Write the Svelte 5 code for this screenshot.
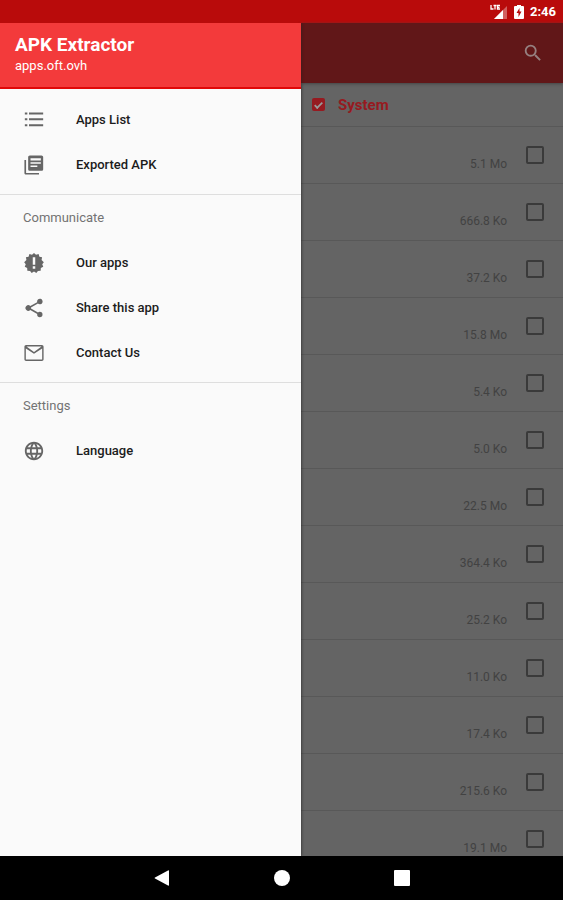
<script>
    let systemApps = true;

    // sizes of the installed apps
    let apps = [
        { size: '5.1 Mo', checked: false },
        { size: '666.8 Ko', checked: false },
        { size: '37.2 Ko', checked: false },
        { size: '15.8 Mo', checked: false },
        { size: '5.4 Ko', checked: false },
        { size: '5.0 Ko', checked: false },
        { size: '22.5 Mo', checked: false },
        { size: '364.4 Ko', checked: false },
        { size: '25.2 Ko', checked: false },
        { size: '11.0 Ko', checked: false },
        { size: '17.4 Ko', checked: false },
        { size: '215.6 Ko', checked: false },
        { size: '19.1 Mo', checked: false }
    ];

    // drawer menu, icons are 24x24 paths
    const menu = [
        {
            items: [
                { label: 'Apps List', icon: 'M1 3h3v2.400H1zM6 3h17v2.400H6zM1 10h3v2.400H1zM6 10h17v2.400H6zM1 17h3v2.400H1zM6 17h17v2.400H6z' },
                { label: 'Exported APK', icon: 'M2.500 6H.5v15.500c0 1.100.9 2 2 2H18v-2H2.500V6zM21 .5H7c-1.100 0-2 .9-2 2v14.500c0 1.100.9 2 2 2h14c1.100 0 2-.9 2-2V2.500c0-1.100-.9-2-2-2zm-.8 10H7.800V8.700h12.400v1.800zm-4.200 4H7.800v-1.800H16v1.800zm4.200-8H7.800V4h12.400v2.500z' }
            ]
        },
        {
            title: 'Communicate',
            items: [
                { label: 'Our apps', icon: 'M12 0l2.400 2.200L17.500 1.300l1 3.100 3.200.8-.6 3.300L23.800 11l-1.900 2.500 1.200 3.100-2.900 1.500-.2 3.300-3.300.1L14.800 24 12 22.300 9.200 24l-1.900-2.500-3.300-.1-.2-3.300-2.900-1.500 1.200-3.100L.2 11l2.700-2.500-.6-3.300 3.200-.8 1-3.100 3.100.9L12 0zm1.500 19v-3h-3v3h3zm0-5V5h-3v9h3z' },
                { label: 'Share this app', icon: 'M19 16.600c-.9 0-1.600.3-2.200.8L8.400 12.700a3 3 0 0 0 0-1.400l8.300-4.700A3.300 3.300 0 1 0 15.700 4.200c0 .3 0 .5.1.8L7.500 9.700a3.300 3.300 0 1 0 0 4.600l8.400 4.800c-.1.200-.1.500-.1.700A3.200 3.200 0 1 0 19 16.600z' },
                { label: 'Contact Us', icon: 'M21.500 2.500h-19c-1.100 0-2 .9-2 2v15c0 1.100.9 2 2 2h19c1.100 0 2-.9 2-2v-15c0-1.100-.9-2-2-2zm.3 17.300H2.200V6.500l9.800 6.300 9.800-6.300v13.300zM12 10.800L3 4.300h18l-9 6.500z' }
            ]
        },
        {
            title: 'Settings',
            items: [
                { label: 'Language', icon: 'M11.990 1C5.900 1 1 5.930 1 12s4.900 11 10.990 11C18.070 23 23 18.070 23 12S18.070 1 11.990 1zm7.600 6.600h-3.240a17 17 0 0 0-1.520-3.920 8.800 8.800 0 0 1 4.760 3.920zM12 3.240c.91 1.320 1.630 2.780 2.100 4.360H9.900c.47-1.580 1.190-3.040 2.100-4.360zM3.490 14.200a9 9 0 0 1 0-4.400h3.710a18 18 0 0 0 0 4.400H3.490zm.9 2.200h3.250c.35 1.380.86 2.690 1.520 3.920a8.800 8.800 0 0 1-4.770-3.920zm3.250-8.800H4.390a8.800 8.800 0 0 1 4.770-3.920A17 17 0 0 0 7.640 7.600zM12 20.760a14.600 14.600 0 0 1-2.100-4.360h4.200A14.600 14.600 0 0 1 12 20.760zm2.570-6.560H9.430a16 16 0 0 1 0-4.400h5.140a16 16 0 0 1 0 4.400zm.28 6.120a17 17 0 0 0 1.510-3.920h3.240a8.800 8.800 0 0 1-4.750 3.920zm1.960-6.120a18 18 0 0 0 0-4.400h3.710a9 9 0 0 1 0 4.400h-3.710z' }
            ]
        }
    ];
</script>

<div class="screen">
    <div class="status">
        <svg width="18" height="16" viewBox="0 0 18 16">
            <path d="M17 2v13H4z" fill="#fff" opacity="0.350" />
            <path d="M13 6v9H4z" fill="#fff" />
            <path d="M1 1v4h2.500M3.500 1.500h3M5 1v4.500M10 1.500H7.500v3.500H10M7.500 3.300h2" fill="none" stroke="#fff" stroke-width="1.300" />
        </svg>
        <svg width="10" height="16" viewBox="0 0 10 16">
            <path d="M3 1h4v1h2q1 0 1 1v11q0 1-1 1H1q-1 0-1-1V3q0-1 1-1h2z" fill="#fff" />
            <path d="M5.500 4L2.500 9H4.500v4l3-5.500h-2z" fill="#b90b0b" />
        </svg>
        <span>2:46</span>
    </div>

    <div class="body">
        <nav class="drawer">
            <header>
                <h1>APK Extractor</h1>
                <p>apps.oft.ovh</p>
            </header>
            {#each menu as group}
                <div class="group" class:titled={group.title}>
                    {#if group.title}
                        <h2>{group.title}</h2>
                    {/if}
                    {#each group.items as item}
                        <button class="item">
                            <svg width="20" height="20" viewBox="0 0 24 24"><path d={item.icon} /></svg>
                            {item.label}
                        </button>
                    {/each}
                </div>
            {/each}
        </nav>

        <main>
            <div class="toolbar">
                <button aria-label="Search">
                    <svg width="22" height="22" viewBox="0 0 24 24">
                        <path d="M15.500 14h-.79l-.28-.27A6.470 6.470 0 0 0 16 9.500 6.500 6.500 0 1 0 9.500 16c1.610 0 3.090-.59 4.230-1.570l.27.28v.79l5 4.990L20.490 19l-4.990-5zm-6 0a4.500 4.500 0 1 1 0-9 4.500 4.500 0 0 1 0 9z" />
                    </svg>
                </button>
            </div>
            <label class="filter">
                <input type="checkbox" bind:checked={systemApps} />
                System
            </label>
            <div class="list">
                {#each apps as app}
                    <label class="app">
                        <span>{app.size}</span>
                        <input type="checkbox" bind:checked={app.checked} />
                    </label>
                {/each}
            </div>
        </main>
    </div>

    <div class="navbar">
        <button aria-label="Back">
            <svg width="16" height="16" viewBox="0 0 16 16"><path d="M15 1v14q0 1-1 .5L1 8.500q-1-.5 0-1L14 .5q1-.5 1 .5z" /></svg>
        </button>
        <button aria-label="Home">
            <svg width="16" height="16" viewBox="0 0 16 16"><circle cx="8" cy="8" r="8" /></svg>
        </button>
        <button aria-label="Recent apps">
            <svg width="16" height="16" viewBox="0 0 16 16"><rect width="16" height="16" rx="1" /></svg>
        </button>
    </div>
</div>

<style>
    :global(body) {
        margin: 0;
    }

    .screen {
        display: flex;
        flex-direction: column;
        height: 100vh;
        overflow: hidden;
        background: #000;
        font-family: Roboto, sans-serif;
    }

    button {
        border: none;
        padding: 0;
        background: none;
        font-family: inherit;
        cursor: pointer;
    }

    svg {
        display: block;
        flex: none;
    }

    .status {
        display: flex;
        flex: none;
        align-items: center;
        justify-content: flex-end;
        gap: 6px;
        height: 23px;
        padding-right: 7px;
        background: #b90b0b;
        color: #fff;
        font-size: 13px;
        font-weight: 700;
    }

    .body {
        display: flex;
        flex: 1;
        min-height: 0;
    }

    .drawer {
        flex: none;
        width: 301px;
        background: #fafafa;
        box-shadow: 0 0 3px #222;
        clip-path: inset(0 -4px 0 0);
        z-index: 1;
    }

    header {
        box-sizing: border-box;
        height: 66px;
        padding: 10px 15px;
        border-bottom: 2px solid #e00808;
        background: #f33a3b;
        color: #fff;
    }

    h1 {
        margin: 0;
        font-size: 19px;
        line-height: 24px;
        font-weight: 700;
    }

    p {
        margin: 0;
        font-size: 13px;
        line-height: 18px;
    }

    .group {
        padding: 8px 0 7px;
        border-bottom: 1px solid #dedede;
    }

    .group.titled {
        padding-top: 0;
    }

    .group:last-child {
        border-bottom: none;
    }

    h2 {
        margin: 0;
        padding-left: 23px;
        color: #737373;
        font-size: 13px;
        line-height: 45px;
        font-weight: 400;
    }

    .item {
        display: flex;
        align-items: center;
        gap: 32px;
        width: 100%;
        height: 45px;
        padding-left: 24px;
        color: #1c1c1c;
        font-size: 13px;
        font-weight: 500;
    }

    .item svg {
        fill: #666;
    }

    main {
        display: flex;
        flex: 1;
        flex-direction: column;
        min-width: 0;
        background: #646464;
    }

    .toolbar {
        display: flex;
        flex: none;
        align-items: center;
        justify-content: flex-end;
        height: 60px;
        padding-right: 19px;
        background: #611718;
        box-shadow: 0 1px 3px #444;
    }

    .toolbar svg {
        fill: #968080;
    }

    .filter {
        display: flex;
        flex: none;
        align-items: center;
        gap: 13px;
        height: 43px;
        padding-left: 11px;
        border-bottom: 1px solid #585858;
        color: #961a20;
        font-size: 15px;
        font-weight: 700;
    }

    .list {
        flex: 1;
        min-height: 0;
        overflow: hidden;
    }

    .app {
        box-sizing: border-box;
        display: flex;
        align-items: center;
        justify-content: flex-end;
        gap: 19px;
        height: 57px;
        padding-right: 19px;
        border-bottom: 1px solid #585858;
        color: #424242;
        font-size: 12px;
    }

    .app span {
        padding-top: 17px;
    }

    input {
        appearance: none;
        box-sizing: border-box;
        width: 18px;
        height: 18px;
        margin: 0;
        border: 2px solid #3a3a3a;
        border-radius: 2px;
    }

    input:checked {
        border-color: #961a20;
        background: #961a20;
    }

    .filter input {
        display: grid;
        place-items: center;
        width: 13px;
        height: 13px;
    }

    /* tick */
    .filter input:checked::after {
        content: '';
        width: 7px;
        height: 3px;
        border: solid #999;
        border-width: 0 0 2px 2px;
        box-sizing: content-box;
        transform: scale(0.9) rotate(-45deg);
    }

    .navbar {
        display: flex;
        flex: none;
        align-items: center;
        justify-content: center;
        gap: 104px;
        height: 44px;
        fill: #fff;
    }
</style>
